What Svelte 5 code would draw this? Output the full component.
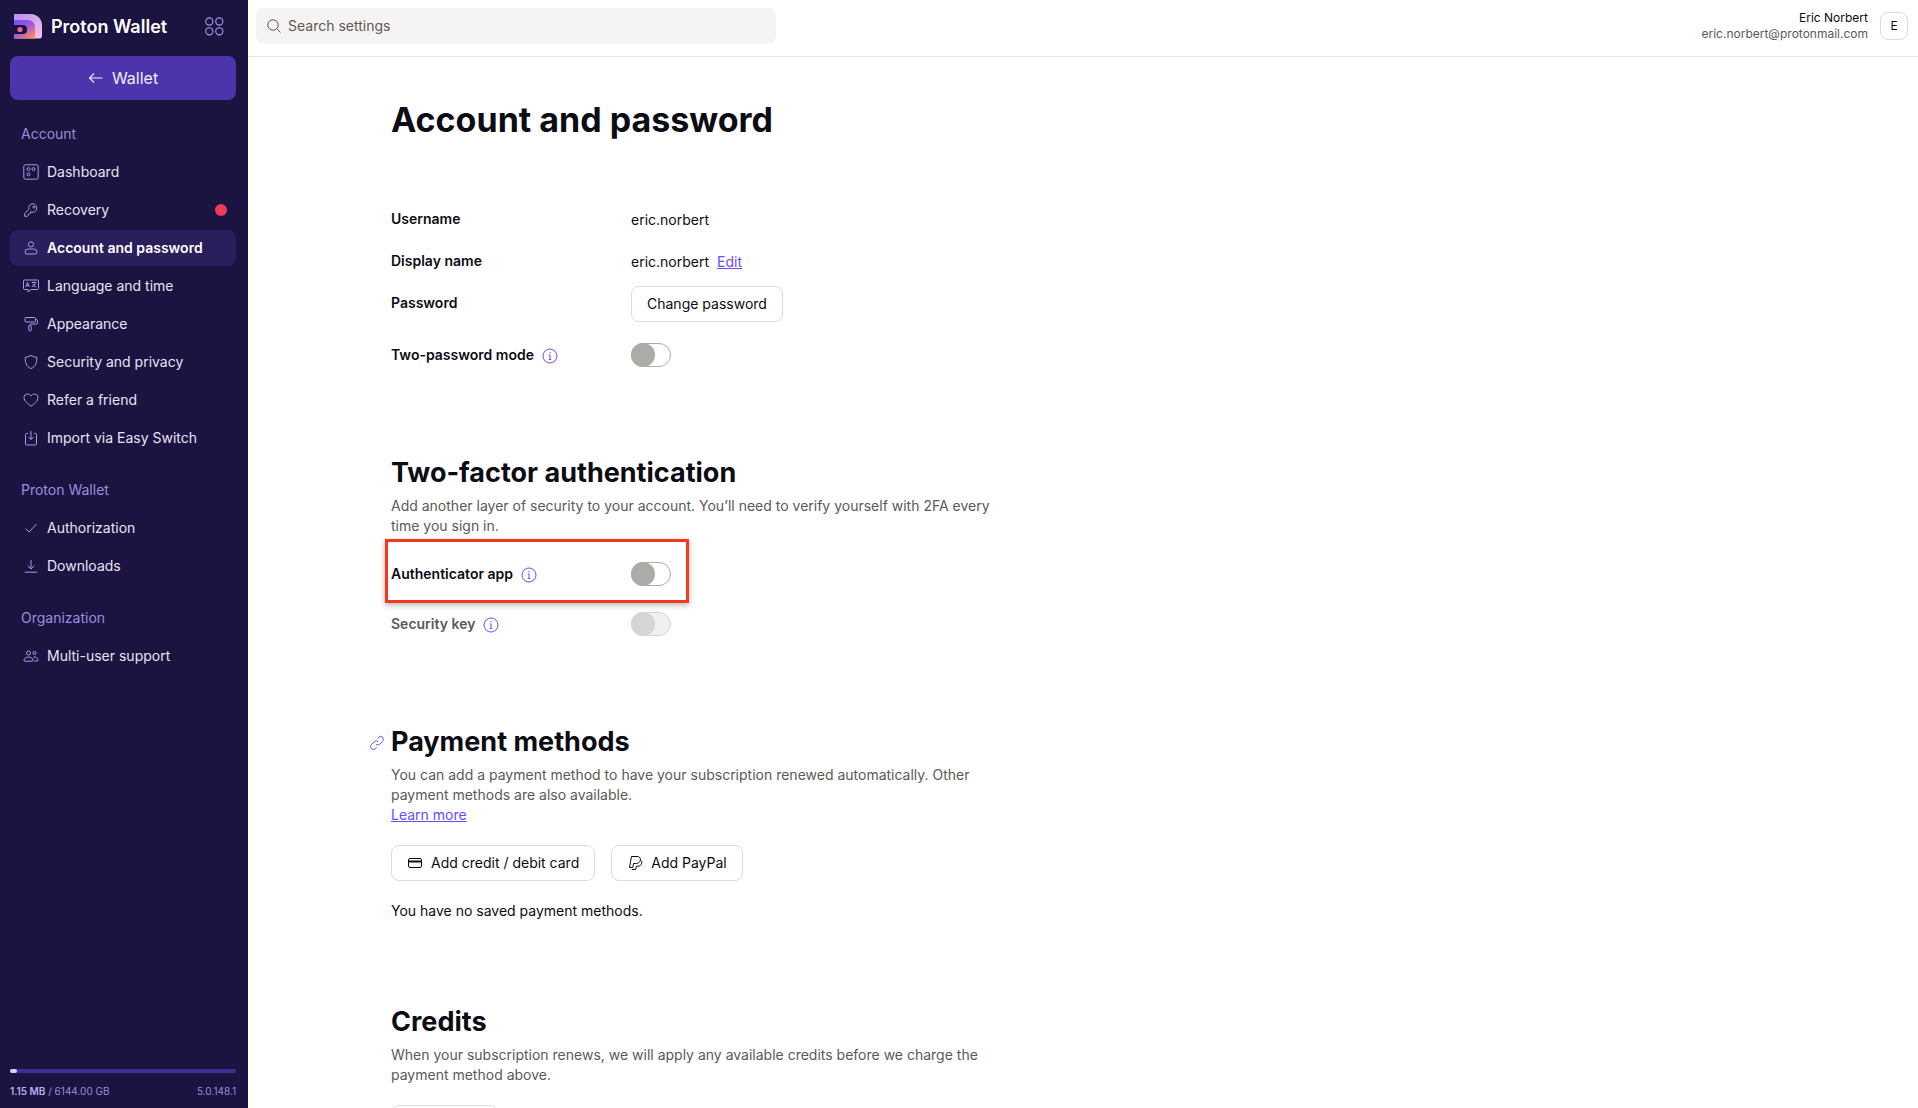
<script>
  const sections = [
    {
      title: 'Account',
      items: [
        { label: 'Dashboard', icon: 'dashboard' },
        { label: 'Recovery', icon: 'key', dot: true },
        { label: 'Account and password', icon: 'user', active: true },
        { label: 'Language and time', icon: 'language' },
        { label: 'Appearance', icon: 'roller' },
        { label: 'Security and privacy', icon: 'shield' },
        { label: 'Refer a friend', icon: 'heart' },
        { label: 'Import via Easy Switch', icon: 'import' }
      ]
    },
    {
      title: 'Proton Wallet',
      items: [
        { label: 'Authorization', icon: 'check' },
        { label: 'Downloads', icon: 'download' }
      ]
    },
    {
      title: 'Organization',
      items: [{ label: 'Multi-user support', icon: 'users' }]
    }
  ];

  const icons = {
    dashboard: 'M2.500 .8h11A1.700 1.700 0 0 1 15.200 2.500v11a1.700 1.700 0 0 1-1.700 1.700h-11A1.700 1.700 0 0 1 .8 13.500v-11A1.700 1.700 0 0 1 2.500 .8ZM5.500 3.600a1.500 1.500 0 1 0 0 3 1.500 1.500 0 0 0 0-3ZM10.500 3.600a1.500 1.500 0 1 0 0 3 1.500 1.500 0 0 0 0-3ZM5.500 8.800a1.500 1.500 0 1 0 0 3 1.500 1.500 0 0 0 0-3Z',
    key: 'M10 1.700a4.300 4.300 0 0 0-4.100 5.600L1.700 11.500v2.800h2.600l.9-1v-1.200h1.300l1-1V9.800a4.300 4.300 0 1 0 2.500-8.100ZM10.900 4.100a1 1 0 1 0 0 2 1 1 0 0 0 0-2Z',
    user: 'M8 1.800a2.600 2.600 0 1 0 0 5.200 2.600 2.600 0 0 0 0-5.200ZM5.200 9h5.600a3.200 3.200 0 0 1 3.200 3.200 1.800 1.800 0 0 1-1.800 1.800H3.800A1.800 1.800 0 0 1 2 12.200 3.200 3.200 0 0 1 5.200 9Z',
    language: 'M1.500 2h13a1 1 0 0 1 1 1v7.500a1 1 0 0 1-1 1H8l-3 2.500v-2.500H1.500a1 1 0 0 1-1-1V3a1 1 0 0 1 1-1ZM2.800 9l1.700-4.800L6.200 9M3.400 7.500h2.200M8.800 4.500h4.400M11 3.500v1M12.500 4.500C12 6.500 10.500 8 8.800 9M9.500 5.800c.7 1.400 2 2.600 3.700 3.200',
    roller: 'M3 1.500h8.500a1 1 0 0 1 1 1v2.500a1 1 0 0 1-1 1H3a1 1 0 0 1-1-1V2.500a1 1 0 0 1 1-1ZM12.500 3.500h1a1 1 0 0 1 1 1V7a1 1 0 0 1-1 1H8a1 1 0 0 0-1 1v.500M6.500 9.500h1.200a.5.5 0 0 1 .5.500v4a1 1 0 0 1-1 1h-.400a1 1 0 0 1-1-1v-4a.5.5 0 0 1 .7-.500Z',
    shield: 'M8 1.500c1.800 1 3.800 1.600 5.800 1.800.2 5-1 9.300-5.800 11.200C3.200 12.600 2 8.300 2.200 3.300 4.200 3.100 6.200 2.500 8 1.500Z',
    heart: 'M8 14.200C5 12 1 9 1 5.500 1 3.300 2.700 2 4.500 2 6 2 7.200 2.800 8 4c.8-1.200 2-2 3.500-2C13.300 2 15 3.300 15 5.500 15 9 11 12 8 14.200Z',
    import: 'M5 3.500H3.500a1 1 0 0 0-1 1V14a1 1 0 0 0 1 1h9a1 1 0 0 0 1-1V4.500a1 1 0 0 0-1-1H11M8 1v8.500M5.500 7 8 9.500 10.500 7',
    check: 'M2.500 8.500 6 12l7.500-8',
    download: 'M8 2v9M4.500 7.500 8 11l3.500-3.500M1.800 14.200h12.400',
    users: 'M5.500 3a2 2 0 1 0 0 4 2 2 0 0 0 0-4ZM11.500 3.500a1.500 1.500 0 1 0 0 3 1.500 1.500 0 0 0 0-3ZM1 12.500C1 10.300 3 9 5.500 9S10 10.300 10 12.500c0 .4-.3.7-.7.7H1.700c-.4 0-.7-.3-.7-.7ZM10.500 9.100c2.300-.4 4.500.7 4.500 3 0 .5-.3.900-.8.900h-3'
  };
</script>

{#snippet info()}
  <svg class="info" viewBox="0 0 16 16" fill="none" stroke="currentColor" stroke-width="1">
    <circle cx="8" cy="8" r="7" />
    <path d="M8 7v4.500M6.800 7H8M6.800 11.500h2.400" />
    <circle cx="8" cy="4.800" r=".7" fill="currentColor" stroke="none" />
  </svg>
{/snippet}

{#snippet toggle(disabled = false)}
  <span class="toggle" class:disabled><span class="thumb"></span></span>
{/snippet}

<div class="app">
  <aside class="sidebar">
    <div class="brand">
      <div class="logo">
        <svg width="30" height="26" viewBox="0 0 30 26">
          <defs>
            <linearGradient id="front" x1="0" y1="0" x2="0.8" y2="1">
              <stop offset="0" stop-color="#6d4aff" />
              <stop offset="0.55" stop-color="#a45bd6" />
              <stop offset="1" stop-color="#ff8a5c" />
            </linearGradient>
            <linearGradient id="back" x1="0" y1="0" x2="1" y2="1">
              <stop offset="0" stop-color="#b58cf5" />
              <stop offset="1" stop-color="#f4c6e6" />
            </linearGradient>
          </defs>
          <path d="M1 1h17c6 0 11 5 11 11v11c0 1.500-1 2.500-2.500 2.500H1Z" fill="url(#back)" />
          <path d="M1 7h14c4 0 7 3 7 7v11.500H3c-1 0-2-1-2-2Z" fill="url(#front)" />
          <path d="M1 12h9a4 4 0 0 1 4 4v1a4 4 0 0 1-4 4H1Z" fill="#1b1340" />
          <circle cx="7" cy="16.500" r="2.600" fill="#e0699a" />
        </svg>
        <span class="logo-text">Proton Wallet</span>
      </div>
      <svg class="apps" width="19" height="19" viewBox="0 0 19 19" fill="none" stroke="#a99bea" stroke-width="1.100">
        <circle cx="4.300" cy="4.500" r="3.600" />
        <circle cx="14.300" cy="4.500" r="3.600" />
        <circle cx="4.300" cy="14.300" r="3.600" />
        <circle cx="14.300" cy="14.300" r="3.600" />
      </svg>
    </div>

    <button class="back">
      <svg width="16" height="16" viewBox="0 0 16 16" fill="none" stroke="currentColor" stroke-width="1.100">
        <path d="M14.500 8H1.500M6 3.500 1.500 8 6 12.500" />
      </svg>
      Wallet
    </button>

    <nav>
      {#each sections as section}
        <div class="section">
          <div class="section-title">{section.title}</div>
          {#each section.items as item}
            <div class="item" class:active={item.active}>
              <svg class="item-icon" viewBox="0 0 16 16" fill="none" stroke="currentColor" stroke-width="1">
                <path d={icons[item.icon]} />
              </svg>
              <span>{item.label}</span>
              {#if item.dot}<span class="dot"></span>{/if}
            </div>
          {/each}
        </div>
      {/each}
    </nav>

    <div class="storage">
      <div class="meter"><div class="meter-fill"></div></div>
      <div class="storage-text">
        <span><b>1.15 MB</b> / 6144.00 GB</span>
        <span>5.0.148.1</span>
      </div>
    </div>
  </aside>

  <div class="main">
    <header class="topbar">
      <div class="search">
        <svg width="16" height="16" viewBox="0 0 16 16" fill="none" stroke="#5c5958" stroke-width="1">
          <circle cx="7" cy="7" r="5.200" />
          <path d="m11 11 3.500 3.500" />
        </svg>
        <span>Search settings</span>
      </div>
      <div class="account">
        <div class="who">
          <div class="who-name">Eric Norbert</div>
          <div class="who-mail">eric.norbert@protonmail.com</div>
        </div>
        <div class="avatar">E</div>
      </div>
    </header>

    <main class="content">
      <h1>Account and password</h1>

      <div class="row row-username">
        <div class="label">Username</div>
        <div class="value">eric.norbert</div>
      </div>
      <div class="row row-display">
        <div class="label">Display name</div>
        <div class="value">eric.norbert <a href="#edit">Edit</a></div>
      </div>
      <div class="row row-password">
        <div class="label">Password</div>
        <div class="value"><button class="btn">Change password</button></div>
      </div>
      <div class="row">
        <div class="label has-info">Two-password mode {@render info()}</div>
        <div class="value">{@render toggle()}</div>
      </div>

      <section class="block">
        <h2>Two-factor authentication</h2>
        <p>Add another layer of security to your account. You’ll need to verify yourself with 2FA every time you sign in.</p>
        <div class="row row-auth">
          <div class="label has-info">Authenticator app {@render info()}</div>
          <div class="value">{@render toggle()}</div>
          <div class="highlight"></div>
        </div>
        <div class="row">
          <div class="label has-info muted">Security key {@render info()}</div>
          <div class="value">{@render toggle(true)}</div>
        </div>
      </section>

      <section class="block">
        <h2>
          <svg class="anchor" viewBox="0 0 16 16" fill="none" stroke="#6d4aff" stroke-width="1">
            <path d="M6.800 9.200a2.800 2.800 0 0 0 4 0l2.900-2.900a2.800 2.800 0 0 0-4-4L8.400 3.600M9.200 6.800a2.800 2.800 0 0 0-4 0l-2.900 2.900a2.800 2.800 0 0 0 4 4l1.300-1.300" />
          </svg>
          Payment methods
        </h2>
        <p>You can add a payment method to have your subscription renewed automatically. Other payment methods are also available.<br /><a href="#more">Learn more</a></p>
        <div class="actions">
          <button class="btn">
            <svg width="16" height="16" viewBox="0 0 16 16" fill="none" stroke="currentColor" stroke-width="1">
              <rect x="1.500" y="3.500" width="13" height="9" rx="1.500" />
              <path d="M1.500 6.500h13" stroke-width="2" />
            </svg>
            Add credit / debit card
          </button>
          <button class="btn">
            <svg width="16" height="16" viewBox="0 0 16 16" fill="none" stroke="currentColor" stroke-width="1">
              <path d="M5 12.500H2.500L4.500 1.500H10c2.500 0 3.800 1.500 3.300 3.700-.4 2-2 3.300-4 3.300H6.500L5.800 12.500Z" />
              <path d="M6.800 14.500H4.800M13.300 5c1.300.7 1.700 1.800 1.400 3.200-.4 1.800-1.800 3-3.700 3H9.300l-.6 3.300H6.500" />
            </svg>
            Add PayPal
          </button>
        </div>
        <div class="note">You have no saved payment methods.</div>
      </section>

      <section class="block credits-block">
        <h2>Credits</h2>
        <p>When your subscription renews, we will apply any available credits before we charge the payment method above.</p>
        <div class="actions"><button class="btn credits" aria-label="Credits"></button></div>
      </section>
    </main>
  </div>
</div>

<style>
  :global(body) {
    margin: 0;
    background: #fff;
    font-family: Inter, "Noto Sans", sans-serif;
    color: #0c0c14;
  }

  .app {
    display: flex;
    height: 1108px;
    overflow: hidden;
    font-size: 14px;
    line-height: 20px;
  }

  .sidebar {
    width: 248px;
    flex: none;
    display: flex;
    flex-direction: column;
    background: #1b1340;
    color: #e8e4f5;
    box-sizing: border-box;
    padding: 0 12px 0 10px;
  }

  .brand {
    height: 56px;
    box-sizing: border-box;
    flex: none;
    display: flex;
    align-items: center;
    justify-content: space-between;
    padding: 0 12px 4px 3px;
  }

  .logo {
    display: flex;
    align-items: center;
    gap: 8px;
  }

  .logo-text {
    color: #fff;
    font-size: 18px;
    font-weight: 600;
    padding-top: 2px;
  }

  .back {
    height: 44px;
    flex: none;
    display: flex;
    align-items: center;
    justify-content: center;
    gap: 8px;
    border: 0;
    border-radius: 8px;
    background: #4d34ad;
    color: #f1eefc;
    font: inherit;
    font-size: 16px;
  }

  .section {
    margin-bottom: 14px;
  }

  .section-title {
    height: 39px;
    box-sizing: border-box;
    padding: 0 0 2px 11px;
    display: flex;
    align-items: center;
    margin-top: 15px;
    color: #9c8dde;
  }

  .item {
    height: 36px;
    margin-bottom: 2px;
    display: flex;
    align-items: center;
    gap: 8px;
    padding: 0 9px 0 13px;
    border-radius: 8px;
    color: #e8e4f5;
  }

  .item.active {
    background: #2a1f5c;
    color: #fff;
    font-weight: 600;
  }

  .item-icon {
    width: 16px;
    height: 16px;
    flex: none;
    color: #a99bea;
  }

  .dot {
    width: 12px;
    height: 12px;
    margin-left: auto;
    border-radius: 50%;
    background: #f03a5c;
  }

  .storage {
    margin-top: auto;
    padding-bottom: 9px;
  }

  .meter {
    height: 4px;
    border-radius: 2px;
    background: #41308f;
  }

  .meter-fill {
    width: 7px;
    height: 4px;
    border-radius: 2px;
    background: #d9d0fa;
  }

  .storage-text {
    display: flex;
    justify-content: space-between;
    margin-top: 10px;
    font-size: 10px;
    line-height: 16px;
    color: #9c8dde;
  }

  .storage-text b {
    color: #b9aeea;
    font-weight: 600;
  }

  .main {
    flex: 1;
    min-width: 0;
  }

  .topbar {
    height: 57px;
    box-sizing: border-box;
    border-bottom: 1px solid #eae7e4;
    display: flex;
    align-items: center;
    justify-content: space-between;
    padding: 0 10px 4px 8px;
  }

  .search {
    width: 520px;
    height: 36px;
    box-sizing: border-box;
    display: flex;
    align-items: center;
    gap: 6px;
    padding: 0 10px;
    background: #f5f4f2;
    border-radius: 8px;
    color: #5c5958;
  }

  .account {
    display: flex;
    align-items: center;
    gap: 12px;
  }

  .who {
    text-align: right;
    font-size: 12px;
    line-height: 16px;
  }

  .who-mail {
    color: #5c5958;
  }

  .avatar {
    width: 28px;
    height: 28px;
    box-sizing: border-box;
    border: 1px solid #dedbd9;
    border-radius: 8px;
    display: flex;
    align-items: center;
    justify-content: center;
    font-size: 12px;
  }

  .content {
    padding: 0 0 0 143px;
    width: 620px;
  }

  h1 {
    margin: 0 0 65px;
    padding-top: 41px;
    font-size: 34px;
    line-height: 44px;
    font-weight: 700;
  }

  h2 {
    position: relative;
    margin: 0;
    padding-top: 1px;
    font-size: 27px;
    line-height: 36px;
    font-weight: 700;
  }

  p {
    margin: 5px 0 0;
    color: #5c5958;
  }

  a {
    color: #6d4aff;
  }

  .row {
    position: relative;
    display: flex;
    align-items: center;
    min-height: 26px;
  }

  .row-username {
    margin-bottom: 16px;
  }

  .row-display {
    margin-bottom: 11px;
  }

  .row-password {
    margin-bottom: 20px;
  }

  .label {
    width: 240px;
    flex: none;
    font-weight: 600;
    position: relative;
    top: -1px;
    display: flex;
    align-items: center;
    gap: 8px;
  }

  .label.has-info {
    top: 0;
  }

  .label.muted {
    color: #5c5958;
  }

  .value {
    display: flex;
    align-items: center;
    gap: 8px;
  }

  .info {
    width: 16px;
    height: 16px;
    color: #6d4aff;
    position: relative;
    top: 1px;
  }

  .toggle {
    width: 40px;
    height: 24px;
    box-sizing: border-box;
    border: 1px solid #adaba8;
    border-radius: 12px;
    background: #fff;
    display: block;
    position: relative;
  }

  .thumb {
    position: absolute;
    left: -1px;
    top: -1px;
    width: 24px;
    height: 24px;
    border-radius: 50%;
    background: #adaba8;
  }

  .toggle.disabled {
    background: #f0efed;
    border-color: #d6d5d3;
  }

  .toggle.disabled .thumb {
    background: #d6d5d3;
  }

  .btn {
    height: 36px;
    box-sizing: border-box;
    display: inline-flex;
    align-items: center;
    gap: 8px;
    padding: 0 15px;
    border: 1px solid #dedbd9;
    border-radius: 8px;
    background: #fff;
    color: #0c0c14;
    font: inherit;
  }

  .block {
    margin-top: 86px;
  }

  .credits-block {
    margin-top: 82px;
  }

  .row-auth {
    margin-top: 25px;
    margin-bottom: 24px;
  }

  .highlight {
    position: absolute;
    left: -6px;
    top: -22px;
    width: 304px;
    height: 64px;
    box-sizing: border-box;
    border: 3px solid #f5381f;
    box-shadow: 0 2px 6px rgba(0, 0, 0, 0.3);
    pointer-events: none;
  }

  .anchor {
    position: absolute;
    left: -22px;
    top: 12px;
    width: 16px;
    height: 16px;
  }

  .actions {
    display: flex;
    gap: 16px;
    margin-top: 20px;
  }

  .note {
    margin-top: 20px;
  }

  .credits {
    width: 107px;
  }
</style>
